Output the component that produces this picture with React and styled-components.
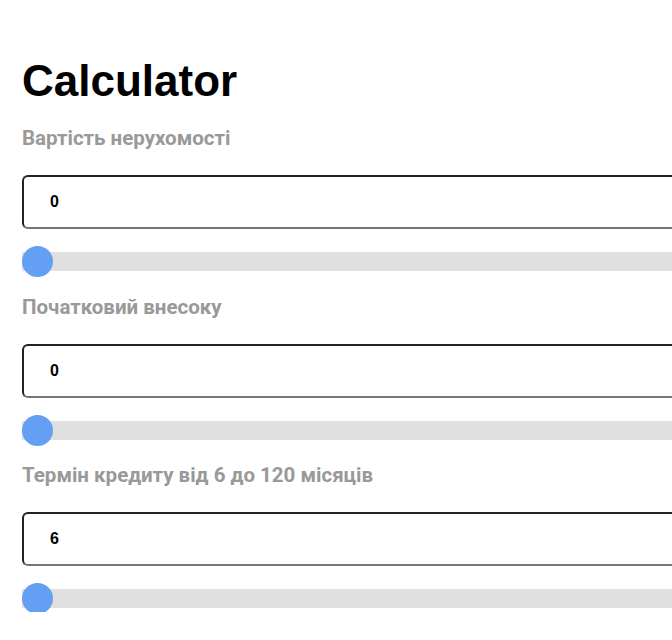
import { useState } from 'react';
import styled, { createGlobalStyle } from 'styled-components';

const GlobalStyle = createGlobalStyle`
    html, body {
        margin: 0;
        padding: 0;
        overflow: hidden;
        background: #fff;
    }
`

const StyledCalculator = styled.main`
    padding: 56px 0 0 22px;
    width: 720px;

    h1 {
        margin: 0;
        font-family: "Liberation Sans", Arial, sans-serif;
        font-weight: 700;
        font-size: 44px;
        line-height: 50px;
        color: #000;
    }
`

const StyledField = styled.section`
    display: flex;
    flex-direction: column;
    margin-top: ${({ $first }) => ($first ? '20px' : '19.5px')};

    label {
        font-family: Roboto, "Liberation Sans", sans-serif;
        font-weight: 700;
        font-size: 20.5px;
        line-height: 24px;
        color: #999;
    }
`

const NumberInput = styled.input`
    box-sizing: border-box;
    margin-top: 25px;
    width: 100%;
    height: 54px;
    padding: 0 0 0 26px;
    border: 2px solid;
    border-color: #222 #767676 #767676 #222;
    border-radius: 6px;
    font-family: "Liberation Sans", Arial, sans-serif;
    font-weight: 700;
    font-size: 16px;
    color: #000;
    outline: none;
`

const Slider = styled.input`
    -webkit-appearance: none;
    appearance: none;
    display: block;
    width: 100%;
    height: 19px;
    margin: 23px 0 4px;
    background: #e0e0e0;
    outline: none;

    &::-webkit-slider-thumb {
        -webkit-appearance: none;
        appearance: none;
        width: 31px;
        height: 31px;
        border-radius: 50%;
        background: #659ff3;
        border: none;
        cursor: pointer;
    }
`

const fields = [
    { id: 'price', label: 'Вартість нерухомості', min: 0, max: 10000000 },
    { id: 'deposit', label: 'Початковий внесоку', min: 0, max: 10000000 },
    { id: 'term', label: 'Термін кредиту від 6 до 120 місяців', min: 6, max: 120 },
];

const Field = ({ id, label, min, max, value, onChange, first }) => (
    <StyledField $first={first}>
        <label htmlFor={id}>{label}</label>
        <NumberInput
            id={id}
            type="text"
            value={value}
            onChange={(e) => onChange(e.target.value)}
        />
        <Slider
            type="range"
            min={min}
            max={max}
            value={value}
            onChange={(e) => onChange(e.target.value)}
        />
    </StyledField>
);

const App = () => {
    const [values, setValues] = useState({ price: 0, deposit: 0, term: 6 });

    return (
        <>
            <GlobalStyle />
            <StyledCalculator>
                <h1>Calculator</h1>
                {fields.map((f, i) => (
                    <Field
                        key={f.id}
                        {...f}
                        first={i === 0}
                        value={values[f.id]}
                        onChange={(v) => setValues({ ...values, [f.id]: v })}
                    />
                ))}
            </StyledCalculator>
        </>
    );
}

export default App;
